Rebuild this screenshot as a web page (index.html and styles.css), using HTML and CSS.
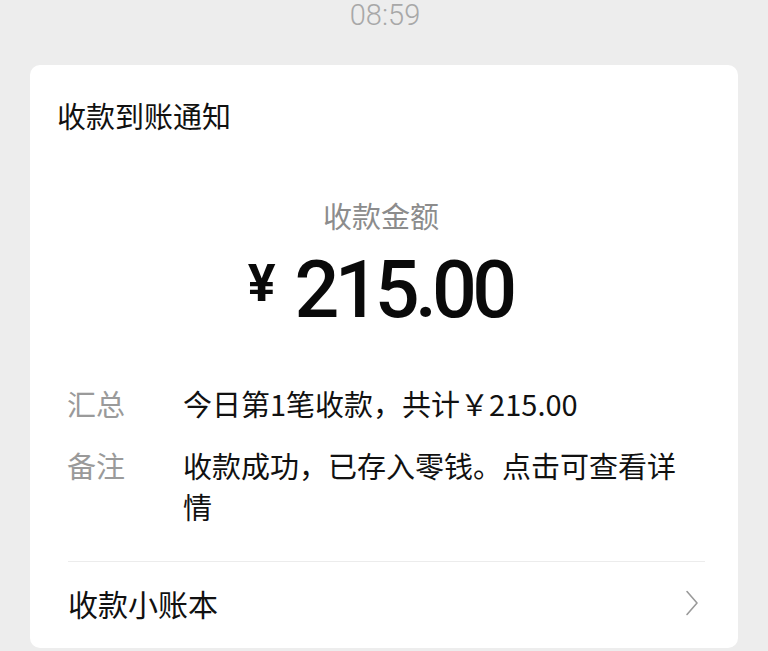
FILE: index.html
```html
<!DOCTYPE html>
<html lang="zh-CN">
<head>
<meta charset="utf-8">
<title>收款到账通知</title>
<link rel="stylesheet" href="styles.css">
</head>
<body>
<div class="time">08:59</div>
<div class="card">
  <div class="card-title">收款到账通知</div>
  <div class="amount-label">收款金额</div>
  <div class="amount"><span class="yen">¥</span><span class="num">215.00</span></div>
  <div class="rows">
    <div class="row">
      <div class="label">汇总</div>
      <div class="value">今日第1笔收款，共计￥215.00</div>
    </div>
    <div class="row">
      <div class="label">备注</div>
      <div class="value">收款成功，已存入零钱。点击可查看详情</div>
    </div>
  </div>
  <div class="link">
    <span>收款小账本</span>
    <svg class="chev" width="14" height="26" viewBox="0 0 14 26"><path d="M2 1.5 L12 13 L2 24.5" fill="none" stroke="#9a9a9a" stroke-width="1.6" stroke-linecap="round" stroke-linejoin="round"/></svg>
  </div>
</div>
</body>
</html>
```
FILE: styles.css
```css
html, body {
  margin: 0;
  padding: 0;
  background: #ededed;
  width: 768px;
  height: 651px;
  overflow: hidden;
  font-family: "Noto Sans CJK SC", "Noto Sans", sans-serif;
}
.time {
  height: 31px;
  line-height: 31px;
  text-align: center;
  font-family: "Roboto", "Liberation Sans", sans-serif;
  font-size: 29px;
  font-weight: 300;
  color: #a8a8a8;
  padding-left: 2px;
}
.card {
  margin: 34px 30px 0 30px;
  background: #ffffff;
  border-radius: 10px;
  height: 583px;
  padding: 0 33px 0 27px;
  box-sizing: border-box;
}
.card-title {
  padding-top: 29px;
  font-size: 29px;
  line-height: 42px;
  color: #111;
}
.amount-label {
  margin-top: 58px;
  text-align: center;
  font-size: 29px;
  line-height: 42px;
  color: #8c8c8c;
}
.amount {
  text-align: center;
  margin-top: 7px;
  height: 82px;
  line-height: 82px;
  padding-right: 2px;
  color: #0a0a0a;
  font-family: "Roboto", "Liberation Sans", sans-serif;
  white-space: nowrap;
}
.yen {
  font-size: 52px;
  font-weight: 700;
  margin-right: 19px;
  vertical-align: 16px;
}
.num {
  font-size: 79px;
  font-weight: 500;
  letter-spacing: -4.8px;
}
.rows {
  margin-top: 58px;
  padding-left: 10px;
}
.row {
  display: flex;
  margin-bottom: 21px;
}
.label {
  width: 116px;
  flex: none;
  font-size: 29px;
  line-height: 41px;
  color: #9a9a9a;
}
.value {
  flex: 1;
  font-size: 29px;
  line-height: 41px;
  color: #111;
  padding-right: 8px;
}
.link {
  margin: 34px 0 0 11px;
  border-top: 1px solid #ececec;
  display: flex;
  align-items: center;
  justify-content: space-between;
  height: 82px;
  font-size: 30px;
  color: #111;
}
.chev {
  margin-right: 6px;
}
```
